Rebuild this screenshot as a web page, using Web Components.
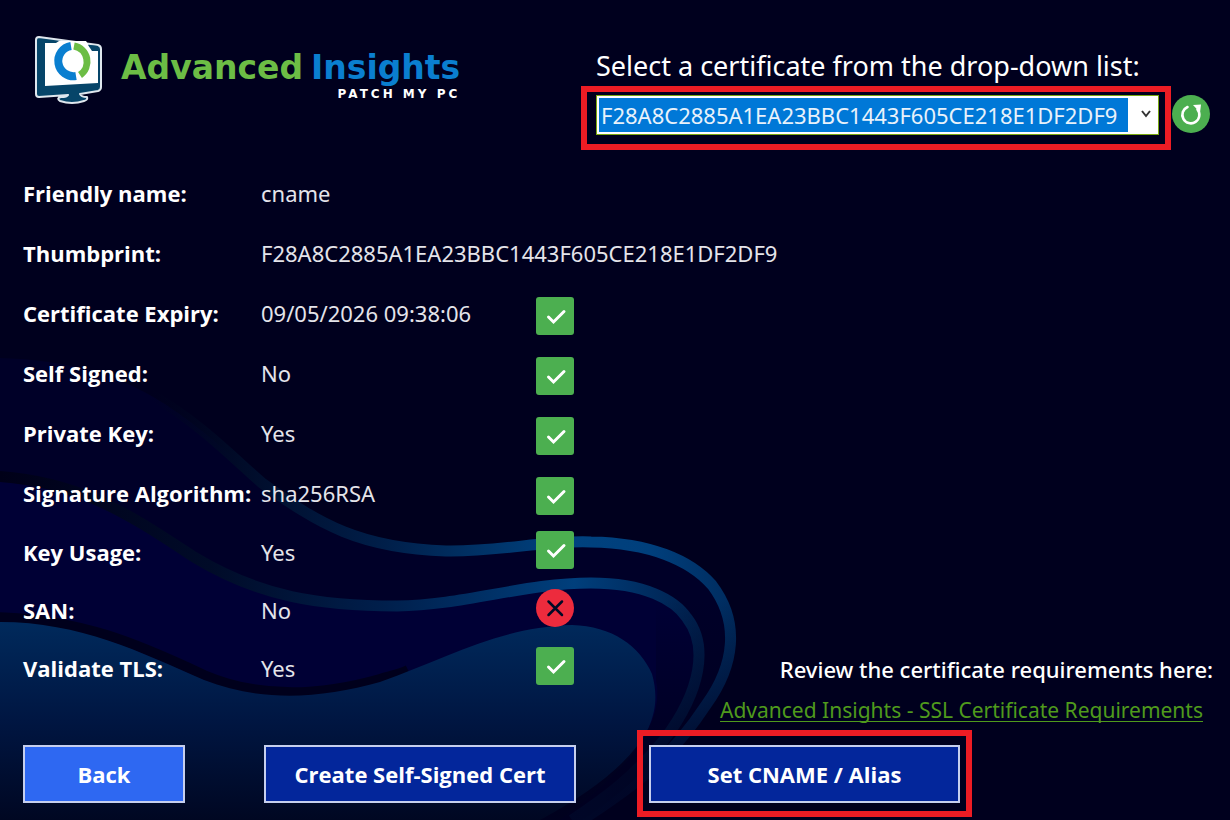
<!DOCTYPE html>
<html lang="en">
<head>
<meta charset="utf-8">
<meta name="viewport" content="width=device-width, initial-scale=1">
<title>Advanced Insights - Certificate</title>
<style>
  :root {
    --bg: #00001e;
    --green: #4caf50;
    --red: #ed1c24;
    --link: #4f9a1c;
    --button: #03269b;
    --button-primary: #2e68f2;
  }
  body {
    margin: 0;
    background: var(--bg);
    color: #fff;
    font-family: "Noto Sans", "Open Sans", sans-serif;
    font-size: 22px;
    line-height: 30px;
  }
</style>
</head>
<body>
<cert-page>
  <brand-logo slot="logo"></brand-logo>
  <cert-picker slot="picker" value="F28A8C2885A1EA23BBC1443F605CE218E1DF2DF9">Select a certificate from the drop-down list:</cert-picker>

  <cert-field label="Friendly name:">cname</cert-field>
  <cert-field label="Thumbprint:">F28A8C2885A1EA23BBC1443F605CE218E1DF2DF9</cert-field>
  <cert-field label="Certificate Expiry:" status="ok">09/05/2026 09:38:06</cert-field>
  <cert-field label="Self Signed:" status="ok">No</cert-field>
  <cert-field label="Private Key:" status="ok">Yes</cert-field>
  <cert-field label="Signature Algorithm:" status="ok">sha256RSA</cert-field>
  <cert-field compact label="Key Usage:" status="ok">Yes</cert-field>
  <cert-field compact label="SAN:" status="bad">No</cert-field>
  <cert-field compact label="Validate TLS:" status="ok">Yes</cert-field>

  <review-note slot="note" link="Advanced Insights - SSL Certificate Requirements">Review the certificate requirements here:</review-note>

  <push-button slot="actions" primary>Back</push-button>
  <push-button slot="actions">Create Self-Signed Cert</push-button>
  <focus-frame slot="actions"><push-button>Set CNAME / Alias</push-button></focus-frame>
</cert-page>

<script>
class CertPage extends HTMLElement {
    constructor() {
        super();
        this.attachShadow({ mode: 'open' });
    }

    connectedCallback() {
        this.shadowRoot.innerHTML = `
      <style>
        :host {
          display: flex;
          flex-direction: column;
          box-sizing: border-box;
          min-height: 100vh;
          position: relative;
          overflow: hidden;
        }
        wave-backdrop {
          position: absolute;
          inset: 0;
        }
        header, main, footer { position: relative; }
        header {
          display: flex;
          justify-content: space-between;
          align-items: flex-start;
          padding: 36px 20px 13px 34px;
        }
        main {
          display: flex;
          justify-content: space-between;
          padding: 0 17px 5px 23px;
        }
        .note {
          align-self: flex-end;
          margin-left: -120px;
        }
        .fields { padding-bottom: 28px; }
        footer {
          display: grid;
          grid-template-columns: 162px 312px auto;
          column-gap: 79px;
          justify-content: start;
          align-items: center;
          padding: 0 23px 2px;
        }
        ::slotted(focus-frame) { margin-left: -18px; }
      </style>
      <wave-backdrop></wave-backdrop>
      <header>
        <slot name="logo"></slot>
        <slot name="picker"></slot>
      </header>
      <main>
        <div class="fields"><slot></slot></div>
        <div class="note"><slot name="note"></slot></div>
      </main>
      <footer><slot name="actions"></slot></footer>
    `;
    }
}

/* Dark ribbons that run behind the whole window */
class WaveBackdrop extends HTMLElement {
    constructor() {
        super();
        this.attachShadow({ mode: 'open' });
        this.shadowRoot.innerHTML = `
      <style>
        :host { display: block; }
        svg { display: block; width: 100%; height: 100%; }
      </style>
      <svg viewBox="0 0 1230 820" preserveAspectRatio="xMinYMax slice" aria-hidden="true">
        <defs>
          <linearGradient id="body" x1="0" y1="620" x2="0" y2="820" gradientUnits="userSpaceOnUse">
            <stop offset="0" stop-color="#002a5c"/>
            <stop offset=".5" stop-color="#001642"/>
            <stop offset="1" stop-color="#000722"/>
          </linearGradient>
          <linearGradient id="side" x1="150" y1="0" x2="740" y2="0" gradientUnits="userSpaceOnUse">
            <stop offset="0" stop-color="#00061e" stop-opacity="0"/>
            <stop offset=".15" stop-color="#000b28"/>
            <stop offset=".4" stop-color="#001f4a"/>
            <stop offset=".7" stop-color="#00427f"/>
            <stop offset=".85" stop-color="#003f7c"/>
            <stop offset="1" stop-color="#002a5c"/>
          </linearGradient>
          <linearGradient id="inner" x1="0" y1="0" x2="700" y2="0" gradientUnits="userSpaceOnUse">
            <stop offset="0" stop-color="#000018"/>
            <stop offset=".3" stop-color="#000b28"/>
            <stop offset=".55" stop-color="#001f4c"/>
            <stop offset=".82" stop-color="#003f7c"/>
            <stop offset="1" stop-color="#001f4c"/>
          </linearGradient>
          <linearGradient id="fade" x1="0" y1="600" x2="0" y2="770" gradientUnits="userSpaceOnUse">
            <stop offset="0" stop-color="#00001e" stop-opacity="0"/>
            <stop offset="1" stop-color="#00001e" stop-opacity=".9"/>
          </linearGradient>
        </defs>
        <path fill="#000028" d="M0 358C70 360 120 375 165 404C205 430 232 457 262 483C320 525 360 548 446 551C500 552 545 540 591 542C650 543 690 560 712 590C740 632 735 665 706 705C670 760 635 785 582 820H0Z"/>
        <path fill="none" stroke="url(#side)" stroke-width="11" d="M150 394C200 423 232 457 262 483C320 525 360 548 446 551C500 552 545 540 591 542C650 543 690 560 712 585C740 622 735 665 706 705C670 760 635 785 582 820"/>
        <path fill="#000035" d="M0 476C80 480 130 515 194 557C260 597 320 606 397 606C465 605 525 583 591 583C645 583 675 600 687 618C708 645 702 690 664 740C635 775 610 795 572 820H0Z"/>
        <path fill="none" stroke="url(#inner)" stroke-width="11" d="M-10 476C80 480 130 515 194 557C260 597 320 606 397 606C465 605 525 583 591 583C645 583 675 600 687 618C708 645 702 690 664 740C635 775 610 795 572 820"/>
        <path fill="none" stroke="#00001c" stroke-width="10" d="M-10 617C80 618 140 645 204 675C260 699 320 696 380 679C390 676 400 674 408 670"/>
        <path fill="url(#body)" d="M0 622C80 622 140 652 204 680C260 702 320 699 380 682C450 657 500 627 572 625C612 626 640 646 652 674C662 710 655 750 560 820H0Z"/>
        <path fill="url(#fade)" d="M656 600H760V820H540Q670 750 656 680Z"/>
      </svg>
    `;
    }
}

class BrandLogo extends HTMLElement {
    constructor() {
        super();
        this.attachShadow({ mode: 'open' });
        this.shadowRoot.innerHTML = `
      <style>
        :host {
          display: flex;
          align-items: flex-start;
          gap: 18px;
          font-family: "DejaVu Sans", sans-serif;
          font-weight: bold;
        }
        svg { width: 69px; height: 69px; flex: none; }
        .words {
          display: flex;
          flex-direction: column;
          align-items: flex-end;
          padding-top: 12px;
        }
        .name {
          display: flex;
          gap: 8px;
          font-size: 33px;
          line-height: 40px;
        }
        .name span:first-child { color: #6cbd45; }
        .name span:last-child { color: #0a7fd0; }
        .by {
          font-size: 12px;
          line-height: 12px;
          letter-spacing: 3px;
        }
      </style>
      <svg viewBox="0 0 69 69" aria-hidden="true">
        <path fill="#064569" stroke="#dfe7ee" stroke-width="2" stroke-linejoin="round" d="M5 1L64 9Q67 10 67 13V51Q67 54 64 55L46 58Q47 61 53 61Q54 64 50 65Q38 69 26 65Q22 62 27 61Q33 61 34 59L5 61Q2 61 2 58V4Q2 1 5 1Z"/>
        <path fill="#fff" d="M11 7L22 7L25 5H52L56 11L64 13V47L11 50Z"/>
        <path fill="#064569" d="M54 9L64 10V15H58Z"/>
        <path fill="none" stroke="#0a7fd0" stroke-width="8" d="M37 10A15 15 0 1 0 42 40"/>
        <path fill="none" stroke="#6cbd45" stroke-width="7" d="M40 10A16 16 0 0 1 46 39"/>
      </svg>
      <div class="words">
        <div class="name"><span>Advanced</span><span>Insights</span></div>
        <div class="by">PATCH MY PC</div>
      </div>
    `;
    }
}

class FocusFrame extends HTMLElement {
    constructor() {
        super();
        this.attachShadow({ mode: 'open' });
        this.shadowRoot.innerHTML = `
      <style>
        :host {
          display: block;
          border: 6px solid var(--red);
          padding: var(--frame-padding, 9px 6px 8px);
        }
      </style>
      <slot></slot>
    `;
    }
}

class CertPicker extends HTMLElement {
    constructor() {
        super();
        this.attachShadow({ mode: 'open' });
    }

    connectedCallback() {
        const value = this.getAttribute('value');
        this.shadowRoot.innerHTML = `
      <style>
        :host { display: block; padding-top: 12px; }
        label {
          display: block;
          padding-left: 15px;
          font-size: 27px;
          line-height: 36px;
          white-space: nowrap;
        }
        .row { display: flex; align-items: flex-start; gap: 1px; padding-top: 2px; }
        focus-frame { --frame-padding: 3px 6px 9px 9px; }
        .box { position: relative; }
        select {
          appearance: none;
          display: block;
          box-sizing: border-box;
          width: 563px;
          height: 40px;
          margin: 0;
          padding: 2px 30px 2px 2px;
          border: 1px solid #7aa80f;
          border-radius: 0;
          background: linear-gradient(#0078d7, #0078d7) content-box, #fff;
          color: #e8f2fb;
          font: inherit;
          text-indent: 2px;
        }
        .box svg {
          position: absolute;
          top: 14px;
          right: 8px;
          width: 10px;
          height: 10px;
          pointer-events: none;
        }
        button {
          width: 38px;
          height: 38px;
          margin-top: 9px;
          padding: 0;
          border: 0;
          border-radius: 50%;
          background: var(--green);
        }
        button svg { display: block; width: 38px; height: 38px; }
      </style>
      <label for="cert"><slot></slot></label>
      <div class="row">
        <focus-frame>
          <div class="box">
            <select id="cert"><option>${value}</option></select>
            <svg viewBox="0 0 10 10" aria-hidden="true"><path fill="none" stroke="#333" stroke-width="2" d="M1 2L5 7L9 2"/></svg>
          </div>
        </focus-frame>
        <button type="button" aria-label="Refresh">
          <svg viewBox="0 0 38 38" aria-hidden="true">
            <path fill="none" stroke="#fff" stroke-width="2.6" stroke-linecap="round" d="M15.5 12A8.5 8.5 0 1 0 25.5 14.5"/>
            <path fill="#fff" d="M21 10L29 9.5L28 17.5Z"/>
          </svg>
        </button>
      </div>
    `;
    }
}

class StatusMark extends HTMLElement {
    constructor() {
        super();
        this.attachShadow({ mode: 'open' });
    }

    connectedCallback() {
        const ok = this.getAttribute('kind') === 'ok';
        const shape = ok
            ? '<rect width="38" height="38" rx="3" fill="#4caf50"/><path fill="none" stroke="#fff" stroke-width="3" stroke-linecap="round" d="M12.5 20L17.5 25L28 14.500"/>'
            : '<circle cx="19" cy="19" r="19" fill="#ed2b3d"/><path fill="none" stroke="#000a26" stroke-width="2.500" stroke-linecap="round" d="M12.5 12.5L26 26M26 12.5L12.5 26"/>';
        this.shadowRoot.innerHTML = `
      <style>
        :host { display: block; }
        svg { display: block; width: 38px; height: 38px; }
      </style>
      <svg viewBox="0 0 38 38" role="img" aria-label="${ok ? 'Passed' : 'Failed'}">${shape}</svg>
    `;
    }
}

class CertField extends HTMLElement {
    constructor() {
        super();
        this.attachShadow({ mode: 'open' });
    }

    connectedCallback() {
        const status = this.getAttribute('status');
        this.shadowRoot.innerHTML = `
      <style>
        :host {
          display: grid;
          grid-template-columns: 238px 275px auto;
          align-items: center;
          height: 60px;
        }
        :host([compact]) { height: 58px; }
        .label {
          font-family: "Open Sans", "Noto Sans", sans-serif;
          font-weight: bold;
          white-space: nowrap;
        }
        .value { color: #e4e4ea; white-space: nowrap; }
        status-mark { padding-top: 6px; }
        :host([compact]) status-mark { padding: 0 0 4px; }
      </style>
      <span class="label">${this.getAttribute('label')}</span>
      <span class="value"><slot></slot></span>
      ${status ? `<status-mark kind="${status}"></status-mark>` : ''}
    `;
    }
}

class ReviewNote extends HTMLElement {
    constructor() {
        super();
        this.attachShadow({ mode: 'open' });
    }

    connectedCallback() {
        this.shadowRoot.innerHTML = `
      <style>
        :host {
          display: flex;
          flex-direction: column;
          align-items: flex-end;
          gap: 11px;
          white-space: nowrap;
        }
        .text { font-weight: 500; }
        a {
          margin-right: 10px;
          color: var(--link);
          font-size: 21px;
          text-decoration-thickness: 1px;
          text-underline-offset: 3px;
          text-decoration-skip-ink: none;
        }
      </style>
      <span class="text"><slot></slot></span>
      <a href="#requirements">${this.getAttribute('link')}</a>
    `;
    }
}

class PushButton extends HTMLElement {
    constructor() {
        super();
        this.attachShadow({ mode: 'open' });
        this.shadowRoot.innerHTML = `
      <style>
        :host { display: block; min-width: 162px; }
        :host(:not([primary])) { min-width: 311px; }
        button {
          display: block;
          box-sizing: border-box;
          width: 100%;
          height: 58px;
          padding: 0 12px;
          border: 2px solid #c6cfee;
          background: var(--button);
          color: #fff;
          font: inherit;
          font-family: "Open Sans", "Noto Sans", sans-serif;
          font-weight: bold;
          white-space: nowrap;
        }
        :host([primary]) button { background: var(--button-primary); }
      </style>
      <button type="button"><slot></slot></button>
    `;
    }
}

customElements.define('wave-backdrop', WaveBackdrop);
customElements.define('brand-logo', BrandLogo);
customElements.define('focus-frame', FocusFrame);
customElements.define('cert-picker', CertPicker);
customElements.define('status-mark', StatusMark);
customElements.define('cert-field', CertField);
customElements.define('review-note', ReviewNote);
customElements.define('push-button', PushButton);
customElements.define('cert-page', CertPage);
</script>
</body>
</html>
